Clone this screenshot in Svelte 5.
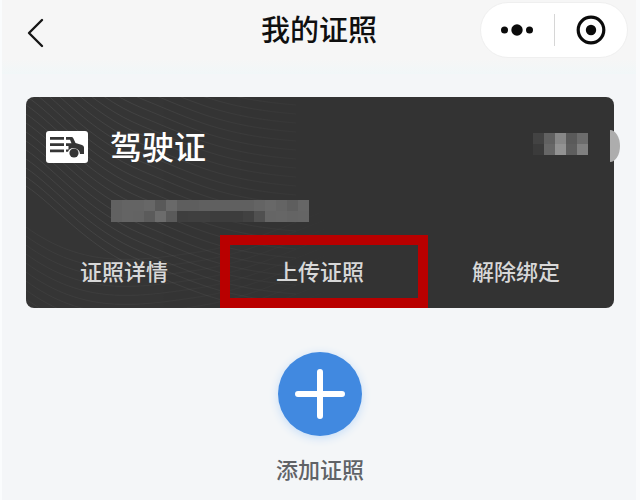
<script lang="ts">
	const actions = [
		{ label: '证照详情', marked: false },
		{ label: '上传证照', marked: true },
		{ label: '解除绑定', marked: false }
	];

	// shades of the blurred-out cells, one array per row
	const statusCells = [
		['#434343', '#616161', '#878787', '#5a5a5a', '#6c6c6c'],
		['#3b3b3b', '#676767', '#929292', '#5e5e5e', '#808080']
	];
	const numberCells = [
		['#616161', '#646464', '#646464', '#676767', '#595959', '#696969', '#5e5e5e', '#5e5e5e', '#606060', '#606060', '#606060', '#606060', '#606060', '#646464', '#686868', '#646464', '#5e5e5e', '#666666'],
		['#616161', '#646464', '#636363', '#5b5b5b', '#6c6c6c', '#5a5a5a', '#3e3e3e', '#3f3f3f', '#3f3f3f', '#3d3d3d', '#3d3d3d', '#3d3d3d', '#414141', '#505050', '#656565', '#666666', '#646464', '#656565']
	];

	const upper = Array.from({ length: 32 }, (_, i) => {
		const y = i * 9 - 190;
		return `M0 ${y}C30 ${y + 20} 62 ${y + 62} 116 ${y + 84}S196 ${y + 120} 270 ${y + 126}`;
	});
	const lower = Array.from({ length: 12 }, (_, i) => {
		const y = i * 9 + 130;
		return `M0 ${y}C58 ${y + 42} 110 ${y + 34} 166 ${y + 26}S250 ${y + 2} 330 ${y - 28}`;
	});
</script>

{#snippet mosaic(rows: string[][])}
	<svg width={rows[0].length * 11} height={rows.length * 11} shape-rendering="crispEdges" aria-hidden="true">
		{#each rows as row, y}
			{#each row as fill, x}
				<rect x={x * 11} y={y * 11} width="11" height="11" {fill} />
			{/each}
		{/each}
	</svg>
{/snippet}

<div class="page">
	<header>
		<button class="back" aria-label="返回">
			<svg width="18" height="30" viewBox="0 0 18 30" fill="none" stroke="#161616" stroke-width="2.4" stroke-linecap="round" stroke-linejoin="round"><path d="M16 2 3 15l13 13" /></svg>
		</button>
		<h1>我的证照</h1>
		<div class="capsule">
			<button aria-label="更多">
				<svg width="34" height="14" viewBox="0 0 34 14" fill="#0b0b0b"><circle cx="4.5" cy="7" r="3.5" /><circle cx="17" cy="7" r="5.7" /><circle cx="29.5" cy="7" r="3.5" /></svg>
			</button>
			<button aria-label="关闭">
				<svg width="30" height="30" viewBox="0 0 30 30"><circle cx="15" cy="15" r="12.8" fill="none" stroke="#0b0b0b" stroke-width="3.2" /><circle cx="15" cy="15" r="5.2" fill="#0b0b0b" /></svg>
			</button>
		</div>
	</header>

	<main>
		<section class="card">
			<svg class="pattern" viewBox="0 0 330 211" preserveAspectRatio="xMinYMin slice" fill="none" stroke="#fff" aria-hidden="true">
				<defs>
					<linearGradient id="fade"><stop offset="0.3" stop-color="#fff" /><stop offset="1" stop-color="#000" /></linearGradient>
					<mask id="fade-mask"><rect width="330" height="211" fill="url(#fade)" /></mask>
				</defs>
				<g mask="url(#fade-mask)">
					<rect width="330" height="211" fill="#fff" fill-opacity="0.012" stroke="none" />
					{#each upper as d}<path {d} stroke-opacity="0.07" />{/each}
					{#each lower as d}<path {d} stroke-opacity="0.04" />{/each}
				</g>
			</svg>

			<div class="card-head">
				<svg width="42" height="32" viewBox="0 0 42 32" aria-hidden="true">
					<rect width="42" height="32" rx="3" fill="#fff" />
					<g fill="#353535">
						<path d="M4 6h14v2.8H4zM4 12.200h14V15H4zM4 18.400h14v2.800H4z" />
						<path d="M20 6h5.500q1.200 0 1.800 1.200L29.500 12l6.500 2q2 .7 2 2.500V23h-4a6.300 6.300 0 0 0-12-2.200h-2v-2.400h2.500V15H20v-2.800h5.500L24 8.800h-4z" />
						<circle cx="28" cy="22" r="4.6" />
					</g>
				</svg>
				<h2>驾驶证</h2>
				<div class="status">{@render mosaic(statusCells)}</div>
			</div>
			<div class="number">{@render mosaic(numberCells)}</div>

			<div class="actions">
				{#each actions as action}
					<button class:marked={action.marked}>{action.label}</button>
				{/each}
			</div>
			<span class="handle"></span>
		</section>

		<button class="add">
			<span class="plus">
				<svg width="50" height="50" viewBox="0 0 50 50" fill="none" stroke="#fff" stroke-width="6" stroke-linecap="round"><path d="M25 3v44M3 25h44" /></svg>
			</span>
			添加证照
		</button>
	</main>
</div>

<style>
	:global(body) { margin: 0; background: #f4f6f8; }
	.page { min-height: 100vh; box-sizing: border-box; border-left: 2px solid #fafcfd; border-right: 4px solid #fafbfc; color: #0f0f0f; font-family: "Noto Sans CJK SC", sans-serif; }
	button { margin: 0; padding: 0; border: 0; background: none; color: inherit; font: inherit; cursor: pointer; }
	svg { display: block; }

	header { display: grid; grid-template-columns: 1fr auto 1fr; align-items: center; padding: 2px 8px 16px; background: linear-gradient(#f6f6f6 80%, #f1f7f8); }
	.back { justify-self: start; padding: 6px 0 0 16px; }
	h1 { margin: 0; padding-bottom: 4px; font-size: 29px; line-height: 40px; font-weight: 500; }
	.capsule { justify-self: end; display: flex; align-items: center; box-sizing: border-box; width: 148px; height: 56px; border: 1px solid #efefef; border-radius: 28px; background: #fff; }
	.capsule button { flex: 1; display: flex; align-items: center; justify-content: center; height: 32px; }
	.capsule button + button { border-left: 1px solid #d6d6d6; }

	main { display: flex; flex-direction: column; align-items: center; padding: 23px 22px 12px 24px; }
	.card { position: relative; align-self: stretch; border-radius: 8px; background: #333; }
	.pattern { position: absolute; top: 0; left: 0; width: 56%; height: 100%; border-radius: 8px; }
	.card-head { position: relative; display: flex; align-items: center; height: 48px; padding: 26px 26px 0 20px; }
	h2 { margin: 0 0 0 22px; padding-bottom: 4px; color: #fff; font-size: 32px; line-height: 48px; font-weight: 500; }
	.status { margin-left: auto; padding-bottom: 6px; }
	.number { position: relative; padding: 29px 0 0 85px; }
	.actions { position: relative; display: grid; grid-template-columns: repeat(3, 1fr); padding-top: 13px; }
	.actions button { position: relative; height: 73px; padding-bottom: 4px; color: #d8d8d8; font-size: 22px; line-height: 32px; font-weight: 500; }
	.marked::after { content: ""; position: absolute; inset: 0 -10px 0 -2px; border: 10px solid #b90000; }
	.handle { position: absolute; top: 33px; right: -6px; width: 10px; height: 32px; border-radius: 0 10px 10px 0 / 0 16px 16px 0; background: #adadad; }

	.add { display: flex; flex-direction: column; align-items: center; gap: 16px; margin-top: 44px; color: #606266; font-size: 22px; line-height: 32px; font-weight: 500; }
	.plus { display: flex; align-items: center; justify-content: center; width: 84px; height: 84px; border-radius: 50%; background: #4189e0; box-shadow: 0 2px 10px #c3dcf8; }
</style>
